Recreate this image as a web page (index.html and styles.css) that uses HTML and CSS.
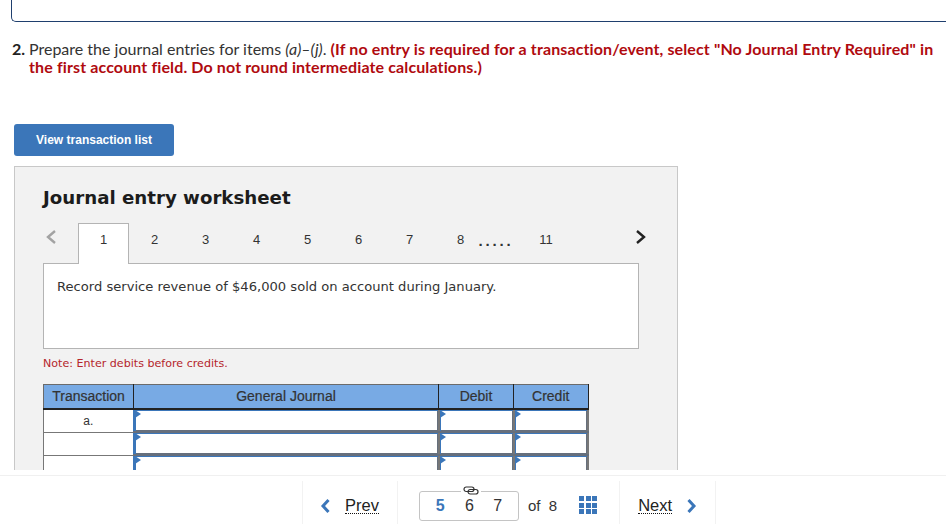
FILE: index.html
```html
<!DOCTYPE html>
<html>
<head>
    <link rel="stylesheet" href="styles.css">
</head>
<body>
    <div id="main">
        <div class="top-box"></div>
        <div class="question">
            <span class="q-num">2.</span>
            <p class="q-text">Prepare the journal entries for items <i>(a)–(j)</i>. <b class="red">(If no entry is required for a transaction/event, select "No Journal Entry Required" in the first account field. Do not round intermediate calculations.)</b></p>
        </div>
        <button class="view-btn">View transaction list</button>
        <div class="worksheet">
            <h2 class="ws-title">Journal entry worksheet</h2>
            <div class="tabs">
                <svg class="tab-arrow" width="12" height="16" viewBox="0 0 12 16"><path d="M10 2 L3 8 L10 14" fill="none" stroke="#a3a3a3" stroke-width="2.4"/></svg>
                <div class="tab active">1</div>
                <div class="tab">2</div>
                <div class="tab">3</div>
                <div class="tab">4</div>
                <div class="tab">5</div>
                <div class="tab">6</div>
                <div class="tab">7</div>
                <div class="tab">8</div>
                <div class="dots">.....</div>
                <div class="tab last">11</div>
                <svg class="tab-next" width="12" height="16" viewBox="0 0 12 16"><path d="M2 2 L9 8 L2 14" fill="none" stroke="#222" stroke-width="2.4"/></svg>
            </div>
            <div class="prompt">Record service revenue of $46,000 sold on account during January.</div>
            <p class="note">Note: Enter debits before credits.</p>
            <table class="journal">
                <tr>
                    <th class="c-tr">Transaction</th>
                    <th class="c-gj">General Journal</th>
                    <th class="c-dr">Debit</th>
                    <th class="c-cr">Credit</th>
                </tr>
                <tr>
                    <td class="c-tr">a.</td>
                    <td class="cell"></td>
                    <td class="cell"></td>
                    <td class="cell"></td>
                </tr>
                <tr>
                    <td class="c-tr"></td>
                    <td class="cell"></td>
                    <td class="cell"></td>
                    <td class="cell"></td>
                </tr>
                <tr>
                    <td class="c-tr"></td>
                    <td class="cell"></td>
                    <td class="cell"></td>
                    <td class="cell"></td>
                </tr>
            </table>
        </div>
    </div>
    <div id="footer">
        <div class="prev-wrap">
            <svg width="11" height="16" viewBox="0 0 11 16"><path d="M8.5 2 L3 8 L8.5 14" fill="none" stroke="#3b76b9" stroke-width="3"/></svg>
            <span class="nav-link">Prev</span>
        </div>
        <div class="pager">
            <svg class="link-icon" width="16" height="9" viewBox="0 0 16 9"><rect x="1" y="1" width="10" height="4.500" rx="2.200" fill="none" stroke="#333" stroke-width="1.200"/><rect x="5" y="3.500" width="10" height="4.500" rx="2.200" fill="none" stroke="#333" stroke-width="1.200"/></svg>
            <span class="pg current">5</span>
            <span class="pg">6</span>
            <span class="pg">7</span>
        </div>
        <div class="of">of&nbsp; 8</div>
        <div class="grid-icon">
            <i></i><i></i><i></i><i></i><i></i><i></i><i></i><i></i><i></i>
        </div>
        <div class="next-wrap">
            <span class="nav-link">Next</span>
            <svg width="11" height="16" viewBox="0 0 11 16"><path d="M2.500 2 L8 8 L2.500 14" fill="none" stroke="#3b76b9" stroke-width="3"/></svg>
        </div>
    </div>
</body>
</html>
```

FILE: styles.css
```css
html, body{
    margin: 0;
    padding: 0;
    height: 532px;
    overflow: hidden;
    background-color: white;
}

#main{
    height: 470px;
    overflow: hidden;
}

.top-box{
    height: 21px;
    margin-left: 11px;
    border-left: 1px solid #1f3f6e;
    border-bottom: 1px solid #1f3f6e;
    border-bottom-left-radius: 5px;
}

.question{
    display: flex;
    margin: 18px 8px 0 12px;
    font-family: "Lato", "Open Sans", sans-serif;
    font-size: 16px;
    line-height: 18px;
    color: #333;
}

.q-num{
    width: 17px;
    flex-shrink: 0;
    font-weight: bold;
    color: #222;
}

.q-text{
    margin: 0;
}

.red{
    color: #b00a0f;
    letter-spacing: 0.12px;
}

.view-btn{
    display: block;
    width: 160px;
    height: 32px;
    margin: 48px 0 0 14px;
    padding: 0;
    border: none;
    border-radius: 3px;
    background-color: #3b76b9;
    color: white;
    font-family: "Liberation Sans", sans-serif;
    font-size: 12px;
    font-weight: bold;
}

.worksheet{
    width: 634px;
    height: 320px;
    margin: 10px 0 0 14px;
    padding: 0 0 0 28px;
    border: 1px solid #c8c8c8;
    background-color: #f2f2f2;
}

.ws-title{
    margin: 19px 0 0 0;
    font-family: "DejaVu Sans", sans-serif;
    font-size: 18.2px;
    line-height: 24px;
    font-weight: bold;
    color: #1c1c1c;
}

.tabs{
    display: flex;
    align-items: center;
    height: 41px;
    margin-top: 13px;
    font-family: "Liberation Sans", sans-serif;
    font-size: 13px;
    color: #333;
    position: relative;
    z-index: 1;
}

.tab-arrow{
    width: 12px;
    margin-left: 2px;
    margin-right: 21px;
    margin-top: -13px;
}

.tab{
    width: 51px;
    padding-bottom: 8px;
    text-align: center;
}

.tab.active{
    height: 40px;
    line-height: 32px;
    padding: 0;
    background-color: white;
    border: 1px solid #b4b4b4;
    border-bottom: none;
    width: 49px;
}

.dots{
    width: 38px;
    margin: 0 6px 0 -9px;
    padding-bottom: 6px;
    font-size: 15px;
    font-weight: bold;
    letter-spacing: 2.8px;
    text-align: center;
}

.tab.last{
    width: 50px;
}

.tab-next{
    margin-left: 64px;
    margin-top: -13px;
}

.prompt{
    box-sizing: border-box;
    width: 596px;
    height: 86px;
    margin-top: -1px;
    padding: 15px 13px;
    background-color: white;
    border: 1px solid #b4b4b4;
    font-family: "DejaVu Sans", sans-serif;
    font-size: 13.1px;
    color: #333;
}

.note{
    margin: 8px 0 0 0;
    font-family: "DejaVu Sans", sans-serif;
    font-size: 11.1px;
    line-height: 14px;
    color: #b5252c;
}

.journal{
    margin-top: 13px;
    width: 546px;
    border-collapse: collapse;
    table-layout: fixed;
    font-family: "Liberation Sans", sans-serif;
    font-size: 14px;
    color: #333;
}

.journal th{
    height: 22px;
    padding: 0 0 1px 0;
    background-color: #78aae4;
    font-weight: normal;
    -webkit-text-stroke: 0.2px #333;
    border-top: 1px solid #6b6b6b;
    border-left: 1px solid #222;
    border-right: 1px solid #222;
    border-bottom: 2px solid #222;
}

.journal th.c-tr{
    border-left: 1px solid #6b6b6b;
}

.c-tr{
    width: 89px;
}

.c-gj{
    width: 304px;
}

.c-dr{
    width: 74px;
}

.journal td{
    height: 21px;
    padding: 0;
    background-color: white;
    font-size: 12px;
    text-align: center;
    border: 1px solid #777;
}

.journal td.cell{
    position: relative;
    border: 2px solid #777;
    border-top: 2px solid #3b76b9;
    border-left: 2px solid #3b76b9;
    border-bottom: 2px solid #666f7c;
    box-shadow: inset 1px 1px 0 #3b76b9, inset -1px -1px 0 #666f7c;
}

/* little blue flag in the corner of an input */
.journal td.cell::before{
    content: "";
    position: absolute;
    left: 0;
    top: 0;
    border-left: 6px solid #3b76b9;
    border-top: 4px solid transparent;
    border-bottom: 4px solid transparent;
}

#footer{
    box-sizing: border-box;
    height: 62px;
    padding-top: 5px;
    display: flex;
    align-items: stretch;
    font-family: "Liberation Sans", sans-serif;
    color: #333;
    position: relative;
}

#footer::before{
    content: "";
    position: absolute;
    left: 0;
    right: 0;
    top: 5px;
    height: 1px;
    background-color: #f0f0f0;
}

.prev-wrap{
    box-sizing: border-box;
    width: 96px;
    height: 43px;
    margin: 6px 0 0 302px;
    padding: 6px 0 0 17px;
    display: flex;
    align-items: center;
    gap: 14px;
    border-left: 1px solid #f2f2f2;
    border-right: 1px solid #f2f2f2;
}

.nav-link{
    font-size: 16.500px;
    line-height: 15px;
    color: #222;
    border-bottom: 1px dotted #111;
}

.pager{
    box-sizing: border-box;
    position: relative;
    width: 100px;
    height: 30px;
    margin: 16px 0 0 21px;
    padding: 0 6px;
    display: flex;
    align-items: center;
    border: 1px solid #c4c4c4;
    border-radius: 3px;
}

.link-icon{
    position: absolute;
    left: 41px;
    top: -6px;
    background-color: white;
    padding: 0 2px;
}

.pg{
    width: 29px;
    text-align: center;
    font-size: 16px;
}

.pg.current{
    margin-right: 1px;
    color: #3b76b9;
    font-weight: bold;
}

.of{
    margin: 16px 0 0 9px;
    font-size: 15px;
    line-height: 30px;
}

.grid-icon{
    display: grid;
    grid-template-columns: repeat(3, 5px);
    grid-auto-rows: 5px;
    gap: 1.500px;
    width: 18px;
    height: 18px;
    margin: 21px 0 0 22px;
}

.grid-icon i{
    background-color: #3b76b9;
}

.next-wrap{
    box-sizing: border-box;
    width: 97px;
    height: 43px;
    margin: 6px 0 0 22px;
    padding: 6px 0 0 18px;
    display: flex;
    align-items: center;
    gap: 14px;
    border-left: 1px solid #f2f2f2;
    border-right: 1px solid #f2f2f2;
}
```
